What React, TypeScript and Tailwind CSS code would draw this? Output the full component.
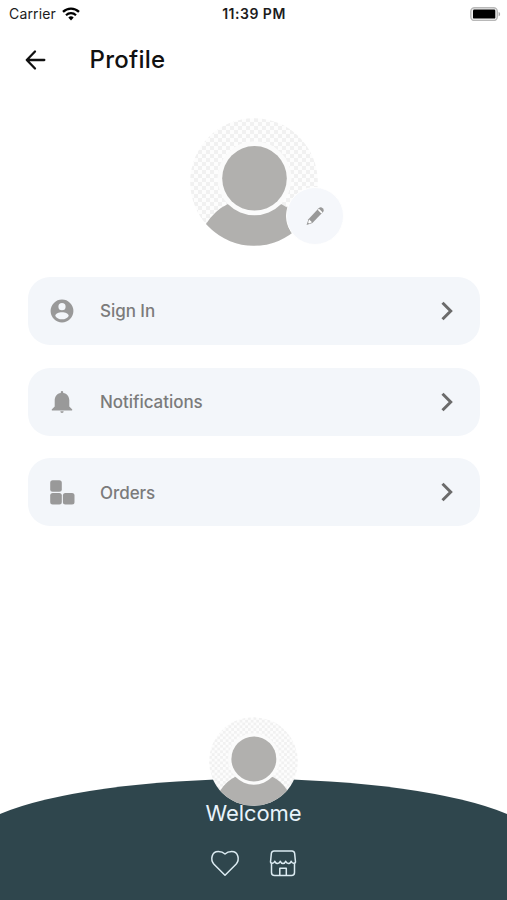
import { ReactNode } from 'react';

function AccountIcon() {
  return (
    <svg viewBox="0 0 24 24" className="size-6" fill="#999999">
      <path
        fillRule="evenodd"
        d="M12 .6a11.4 11.4 0 1 1 0 22.8 11.4 11.4 0 0 1 0-22.8Zm0 3.5a3.6 3.6 0 1 0 0 7.2 3.6 3.6 0 0 0 0-7.2Zm0 9.2c-3.3 0-6.7 1.6-6.7 3.6 1.4 2.1 3.8 3.4 6.7 3.4s5.3-1.3 6.7-3.4c0-2-3.4-3.6-6.7-3.6Z"
      />
    </svg>
  );
}

function BellIcon() {
  return (
    <svg viewBox="0 0 24 24" className="size-6" fill="#999999">
      <path d="M12 1c.8 0 1.2.6 1.2 1.3v.6c3.9.6 6.1 3.5 6.1 7.3v6.3l2.500 2.500c.8.800.6 1.600-.4 1.600H2.600c-1 0-1.200-.8-.4-1.600l2.500-2.500v-6.300c0-3.800 2.200-6.700 6.100-7.300v-.6C10.800 1.600 11.200 1 12 1Z" />
      <path d="M10.3 21.2h3.400a1.700 1.700 0 0 1-3.400 0Z" />
    </svg>
  );
}

function OrdersIcon() {
  return (
    <svg viewBox="0 0 25 25" className="size-[25px]" fill="#999999">
      <rect x="0.2" y="0.2" width="11.6" height="11.6" rx="2.5" />
      <rect x="0.2" y="12.9" width="11.6" height="11.6" rx="2.5" />
      <rect x="12.9" y="12.9" width="11.6" height="11.6" rx="2.5" />
    </svg>
  );
}

function PencilIcon() {
  return (
    <svg viewBox="0 0 20 20" className="size-5">
      <path
        d="M1.6 19 3.4 13.2 13.7 2.300c1.200-1.200 2.600-1.300 4-.1 1.300 1.200 1.400 2.600.3 3.900L7.400 17Z"
        fill="#999999"
      />
      <path d="m4.1 13.6 2.9 2.700-3 1.200-.9-.9Z" fill="#ffffff" />
      <path d="m13.9 3.9 2.500 2.400" stroke="#ffffff" strokeWidth="1.7" strokeLinecap="round" />
    </svg>
  );
}

function ChevronIcon() {
  return (
    <svg viewBox="0 0 12 20" className="h-5 w-3" fill="none" stroke="#6b6b6b" strokeWidth="3">
      <path d="m1.500 1.800 8.200 8.200-8.200 8.200" />
    </svg>
  );
}

function Avatar({ id, className }: { id: string; className: string }) {
  return (
    <svg viewBox="0 0 128 128" className={className}>
      <defs>
        <pattern id={`${id}-checks`} width="8" height="8" patternUnits="userSpaceOnUse">
          <rect width="8" height="8" fill="#fdfdfd" />
          <rect width="4" height="4" fill="#f1f1f1" />
          <rect x="4" y="4" width="4" height="4" fill="#f1f1f1" />
        </pattern>
        <clipPath id={`${id}-clip`}>
          <circle cx="64" cy="64" r="63.8" />
        </clipPath>
      </defs>
      <g clipPath={`url(#${id}-clip)`}>
        <rect width="128" height="128" fill={`url(#${id}-checks)`} />
        <path d="M16 106Q25 92 38 86H91Q104 92 113 106V128H16Z" fill="#b1b0ae" />
        <circle cx="64.5" cy="60.3" r="37" fill="#fbfbfb" />
        <circle cx="64.5" cy="60.3" r="32.3" fill="#b1b0ae" />
      </g>
    </svg>
  );
}

function MenuItem({ icon, label }: { icon: ReactNode; label: string }) {
  return (
    <button
      type="button"
      className="flex h-[68px] w-full items-center rounded-[22px] bg-[#f3f6fa] pr-[27px] pl-[22px]"
    >
      <span className="flex w-[25px] justify-center">{icon}</span>
      <span className="ml-[25.5px] flex-1 pt-[2.5px] text-left text-[17px] font-medium tracking-[-0.05px] text-[#7b7b7b]">
        {label}
      </span>
      <ChevronIcon />
    </button>
  );
}

function StatusBar() {
  return (
    <div className="grid h-[27px] grid-cols-3 items-center pr-[6px] pl-[9px] text-[14px] text-[#1c1c1c]">
      <div className="flex items-center gap-[6px]">
        <span className="tracking-[0.15px]">Carrier</span>
        <svg viewBox="0 0 18 14" className="h-[14px] w-[18px]" fill="none" stroke="#000000">
          <path d="M1 4.800a11.500 11.500 0 0 1 16 0" strokeWidth="2.3" />
          <path d="M4 8.200a7.200 7.200 0 0 1 10 0" strokeWidth="2.2" />
          <path d="m9 13.500-2.700-2.900a4 4 0 0 1 5.400 0Z" fill="#000000" stroke="none" />
        </svg>
      </div>
      <span className="-ml-0.5 text-center font-semibold tracking-[0.5px] whitespace-nowrap">
        11:39 PM
      </span>
      <svg viewBox="0 0 31 14" className="h-[14px] w-[31px] justify-self-end">
        <rect
          x="0.8"
          y="0.7"
          width="26.5"
          height="12.8"
          rx="3.8"
          fill="#f2f2f2"
          stroke="#b8b8b8"
          strokeWidth="1.4"
        />
        <rect x="3" y="2.6" width="22.3" height="9" rx="1.2" fill="#000000" />
        <path d="M28.600 5c2 .4 2 3.800 0 4.200Z" fill="#a8a8a8" />
      </svg>
    </div>
  );
}

export default function Profile() {
  return (
    <div className="flex h-[900px] w-[507px] flex-col overflow-hidden bg-white font-['Inter',sans-serif]">
      <StatusBar />

      <header className="flex h-[65px] items-center pl-[25px]">
        <svg
          viewBox="0 0 22 22"
          className="size-[22px]"
          fill="none"
          stroke="#111111"
          strokeWidth="2.3"
          strokeLinecap="round"
          strokeLinejoin="round"
        >
          <path d="M10 2.500 1.800 11l8.200 8.500M1.800 11h17.500" />
        </svg>
        <h1 className="ml-[42.5px] pt-px text-[24px] font-medium tracking-[0.25px] text-[#111111]">
          Profile
        </h1>
      </header>

      <div className="mt-[26px] flex justify-center">
        <div className="relative">
          <Avatar id="profile" className="size-32" />
          <button
            type="button"
            className="absolute top-[69px] left-[96.5px] flex size-[58px] items-center justify-center rounded-full border border-white bg-[#f5f7fb]"
          >
            <PencilIcon />
          </button>
        </div>
      </div>

      <nav className="mt-[30.75px] flex flex-col gap-[22.85px] px-[27.5px]">
        <MenuItem icon={<AccountIcon />} label="Sign In" />
        <MenuItem icon={<BellIcon />} label="Notifications" />
        <MenuItem icon={<OrdersIcon />} label="Orders" />
      </nav>

      <footer className="relative mt-auto flex h-[183px] flex-col items-center">
        <svg viewBox="0 0 507 122" className="absolute bottom-0 left-0 h-[122px] w-[507px]">
          <path d="M0 122V36A290 68 0 0 1 507 36V122Z" fill="#2f464d" />
        </svg>
        <Avatar id="footer" className="relative size-[89px]" />
        <p className="relative -mt-[7px] text-[22px] leading-7 tracking-[-0.1px] text-[#e8f3fb]">
          Welcome
        </p>
        <div className="relative mt-[22px] flex gap-[29px]">
          <svg
            viewBox="0 0 30 28"
            className="h-7 w-[30px]"
            fill="none"
            stroke="#dcebf2"
            strokeWidth="1.5"
            strokeLinejoin="round"
          >
            <path d="M15 26.200 4 15.200C0 10.700 1.600 2.600 8.300 2.600c2.800 0 5.200 1 6.700 2.400 1.500-1.400 3.900-2.400 6.700-2.400 6.700 0 8.300 8.100 4.300 12.600Z" />
          </svg>
          <svg
            viewBox="0 0 28 28"
            className="size-7"
            fill="none"
            stroke="#dcebf2"
            strokeWidth="1.5"
            strokeLinejoin="round"
          >
            <path d="M5 2h18c1.400 0 2.300.8 2.600 2.200L26.500 13c-.4 1.800-3.200 2-4.300-.8-1 2.900-4.400 2.900-5.500 0-1 2.900-4.400 2.900-5.400 0-1.100 2.900-4.500 2.900-5.500 0-1.100 2.800-3.900 2.600-4.300.8L2.400 4.200C2.700 2.800 3.600 2 5 2Z" />
            <path d="M2.500 14.500v9c0 1.800 1.200 3 3 3h17c1.800 0 3-1.200 3-3v-9M10.800 26.500v-7.300h6.500v7.300" />
          </svg>
        </div>
      </footer>
    </div>
  );
}
